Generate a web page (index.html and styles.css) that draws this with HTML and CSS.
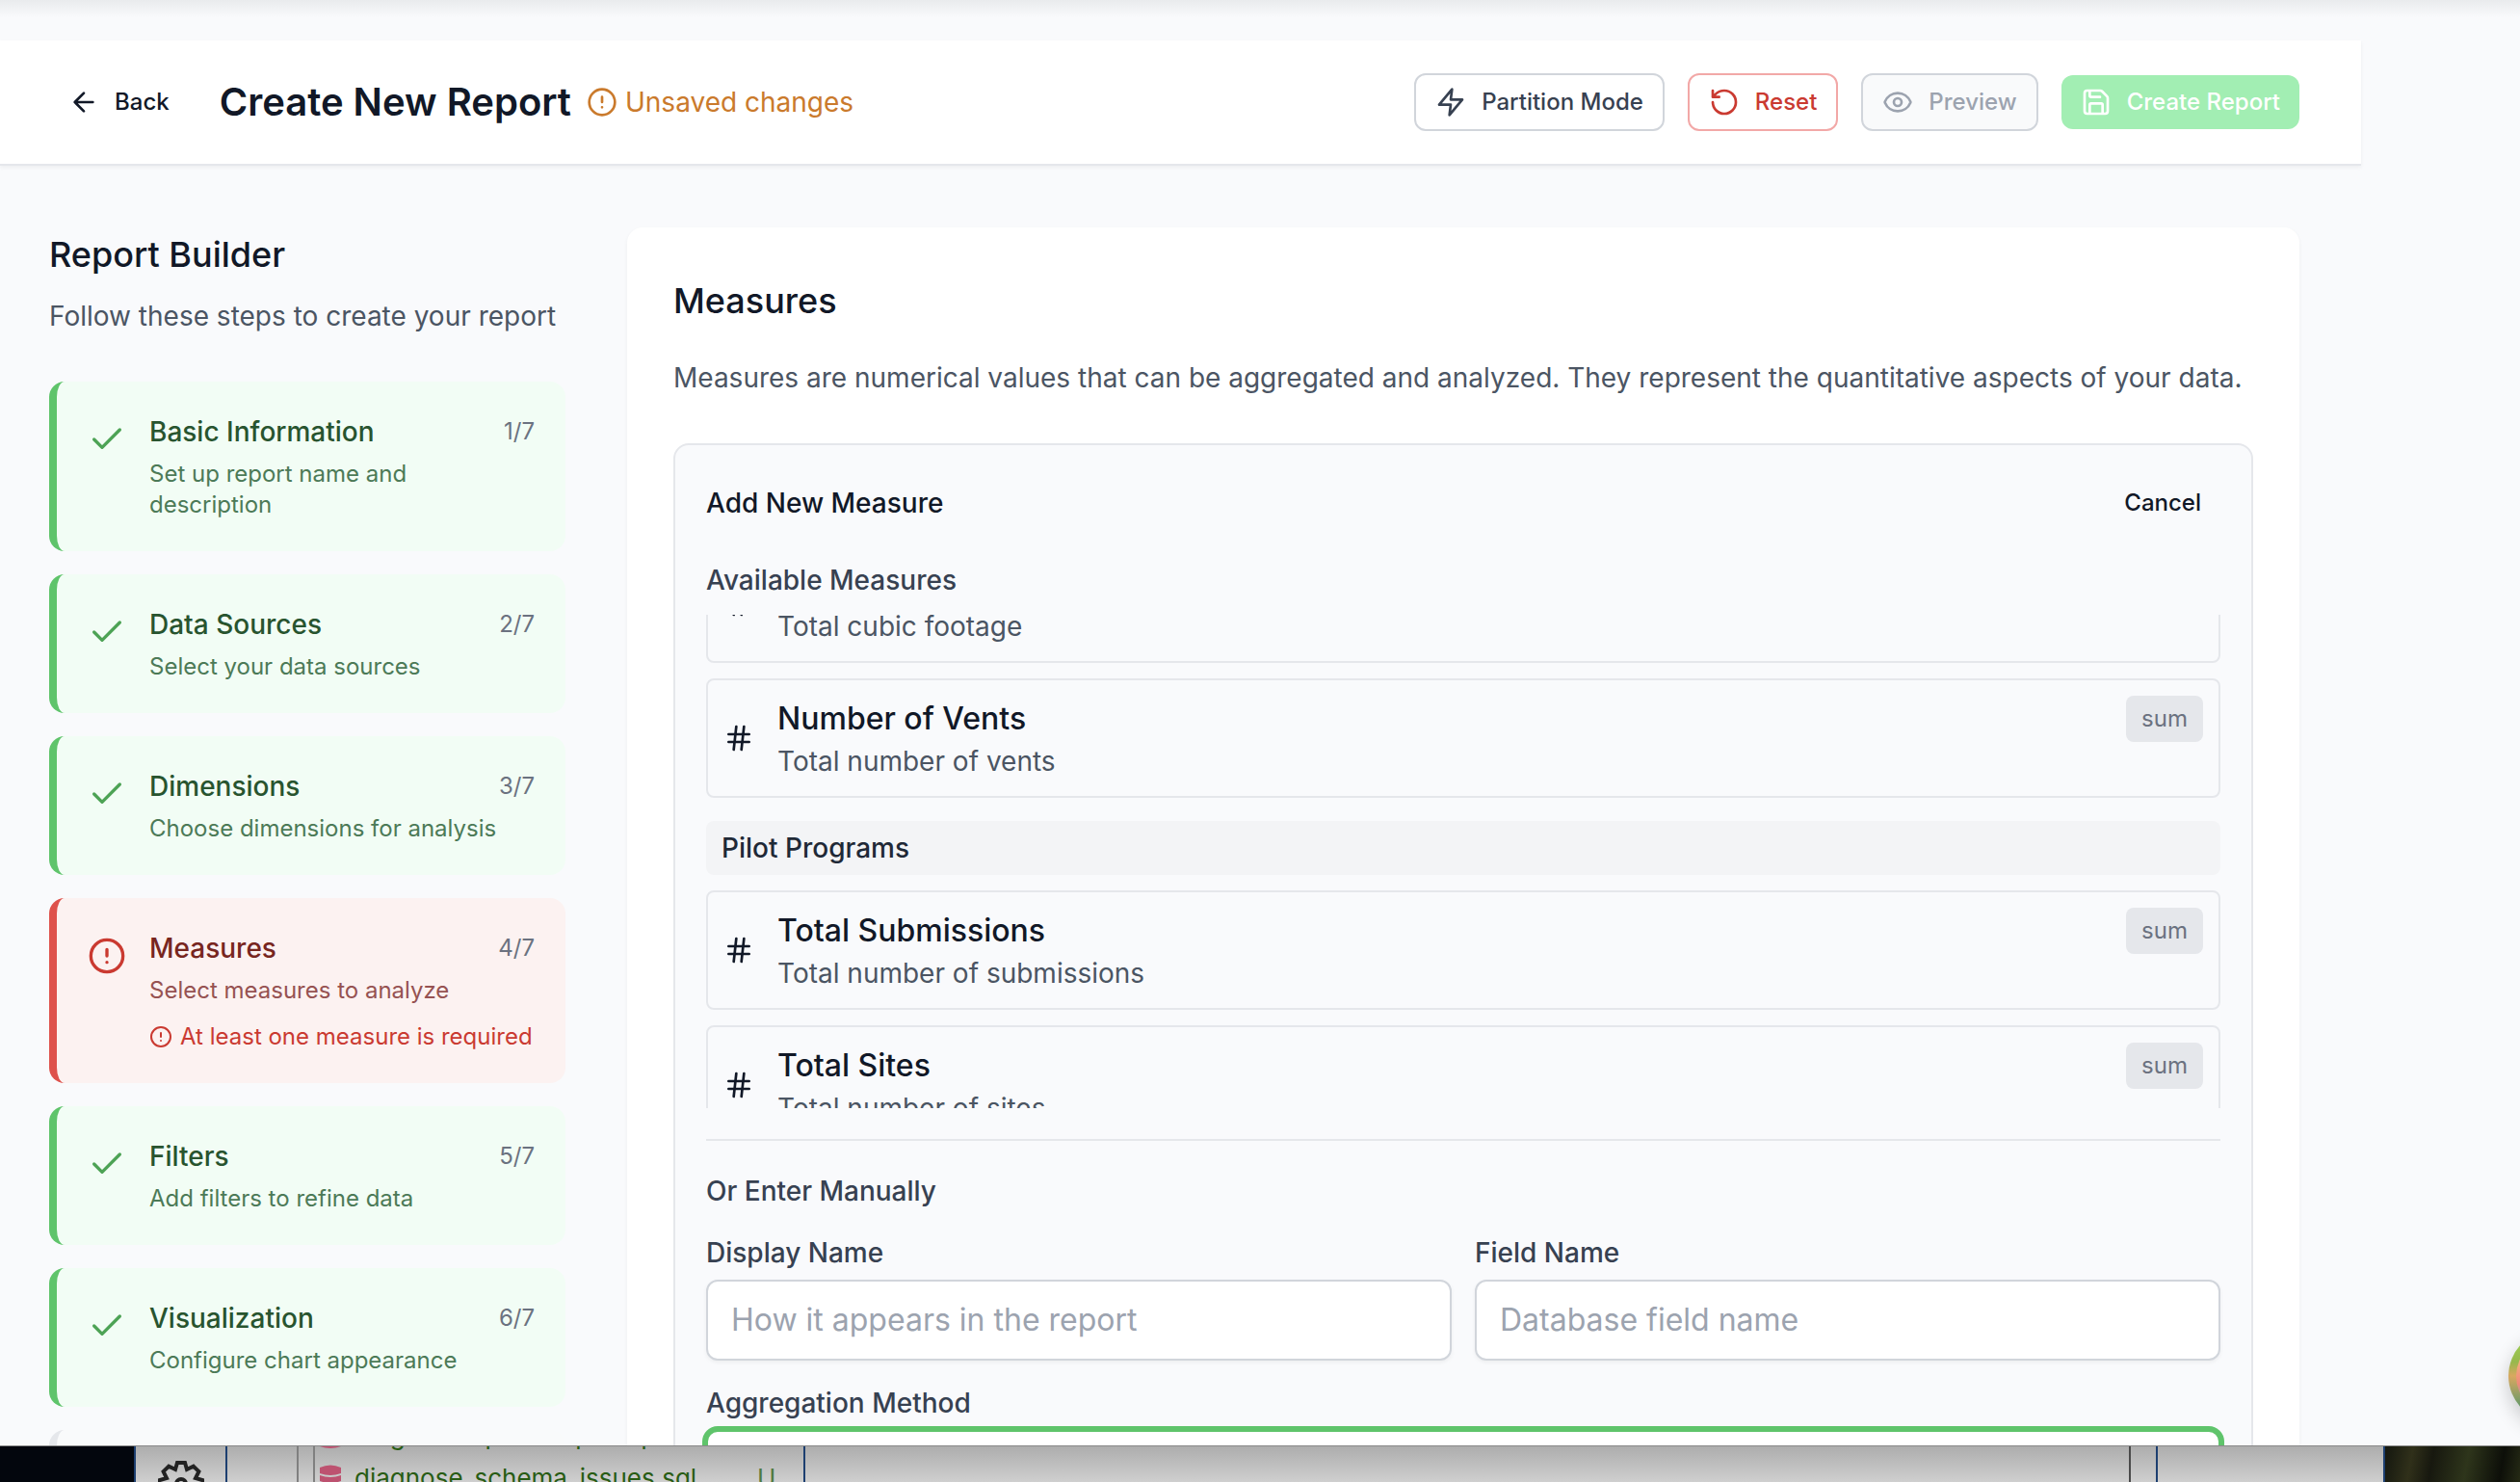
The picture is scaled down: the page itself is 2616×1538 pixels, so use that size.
FILE: index.html
```html
<!DOCTYPE html>
<html lang="en">
<head>
<meta charset="utf-8">
<title>Create New Report</title>
<link rel="stylesheet" href="styles.css">
</head>
<body>
<svg class="sprite" aria-hidden="true">
  <symbol id="check" viewBox="0 0 24 24"><path d="M20 6 9 17l-5-5"/></symbol>
  <symbol id="alert" viewBox="0 0 24 24"><circle cx="12" cy="12" r="10"/><path d="M12 8v4M12 16h.01"/></symbol>
  <symbol id="hash" viewBox="0 0 24 24"><path d="M4 9h16M4 15h16M10 3 8 21M16 3l-2 18"/></symbol>
  <symbol id="back" viewBox="0 0 24 24"><path d="m12 19-7-7 7-7M19 12H5"/></symbol>
  <symbol id="bolt" viewBox="0 0 24 24"><path d="M13 2 3 14h9l-1 8 10-12h-9z"/></symbol>
  <symbol id="reset" viewBox="0 0 24 24"><path d="M3 12a9 9 0 1 0 9-9 9.75 9.75 0 0 0-6.74 2.74L3 8M3 3v5h5"/></symbol>
  <symbol id="eye" viewBox="0 0 24 24"><path d="M2.06 12.35a1 1 0 0 1 0-.7 10.75 10.75 0 0 1 19.88 0 1 1 0 0 1 0 .7 10.75 10.75 0 0 1-19.88 0"/><circle cx="12" cy="12" r="3"/></symbol>
  <symbol id="save" viewBox="0 0 24 24"><path d="M15.2 3a2 2 0 0 1 1.4.6l3.8 3.8a2 2 0 0 1 .6 1.4V19a2 2 0 0 1-2 2H5a2 2 0 0 1-2-2V5a2 2 0 0 1 2-2zM17 21v-7a1 1 0 0 0-1-1H8a1 1 0 0 0-1 1v7M7 3v4a1 1 0 0 0 1 1h7"/></symbol>
  <symbol id="gear" viewBox="0 0 48 52"><path d="M20 4h8l2 7 6.800-3.400 5.600 5.600L39 20l7 2v8l-7 2 3.400 6.800-5.600 5.600L30 41l-2 7h-8l-2-7-6.800 3.400-5.600-5.600L9 32l-7-2v-8l7-2-3.400-6.800 5.600-5.600L18 11z"/><circle cx="24" cy="26" r="5"/></symbol>
  <symbol id="database" viewBox="0 0 22 28"><path d="M0 3q11-5 22 0v6q-11 4-22 0zM0 11q11 4 22 0v6q-11 4-22 0zM0 19q11 4 22 0v6q-11 4-22 0z"/></symbol>
</svg>

<div class="window">
  <header class="topbar">
    <button class="btn btn-ghost" type="button"><svg class="icon"><use href="#back"/></svg>Back</button>
    <h1 class="topbar-title">Create New Report</h1>
    <p class="unsaved"><svg class="icon"><use href="#alert"/></svg>Unsaved changes</p>
    <div class="actions">
      <button class="btn btn-outline" type="button"><svg class="icon"><use href="#bolt"/></svg>Partition Mode</button>
      <button class="btn btn-outline btn-danger" type="button"><svg class="icon"><use href="#reset"/></svg>Reset</button>
      <button class="btn btn-outline btn-muted" type="button" disabled><svg class="icon"><use href="#eye"/></svg>Preview</button>
      <button class="btn btn-primary" type="button" disabled><svg class="icon"><use href="#save"/></svg>Create Report</button>
    </div>
  </header>

  <div class="layout">
    <aside class="sidebar">
      <h2 class="heading">Report Builder</h2>
      <p class="sidebar-intro">Follow these steps to create your report</p>
      <ol class="steps">
        <li class="step"><svg class="step-icon"><use href="#check"/></svg><div class="step-body"><h3 class="step-title">Basic Information</h3><p class="step-text">Set up report name and description</p></div><span class="step-count">1/7</span></li>
        <li class="step"><svg class="step-icon"><use href="#check"/></svg><div class="step-body"><h3 class="step-title">Data Sources</h3><p class="step-text">Select your data sources</p></div><span class="step-count">2/7</span></li>
        <li class="step"><svg class="step-icon"><use href="#check"/></svg><div class="step-body"><h3 class="step-title">Dimensions</h3><p class="step-text">Choose dimensions for analysis</p></div><span class="step-count">3/7</span></li>
        <li class="step step-error"><svg class="step-icon"><use href="#alert"/></svg><div class="step-body"><h3 class="step-title">Measures</h3><p class="step-text">Select measures to analyze</p><p class="step-alert"><svg class="icon-small"><use href="#alert"/></svg>At least one measure is required</p></div><span class="step-count">4/7</span></li>
        <li class="step"><svg class="step-icon"><use href="#check"/></svg><div class="step-body"><h3 class="step-title">Filters</h3><p class="step-text">Add filters to refine data</p></div><span class="step-count">5/7</span></li>
        <li class="step"><svg class="step-icon"><use href="#check"/></svg><div class="step-body"><h3 class="step-title">Visualization</h3><p class="step-text">Configure chart appearance</p></div><span class="step-count">6/7</span></li>
        <li class="step step-pending"></li>
      </ol>
    </aside>

    <main class="panel">
      <h2 class="heading">Measures</h2>
      <p class="panel-intro">Measures are numerical values that can be aggregated and analyzed. They represent the quantitative aspects of your data.</p>
      <section class="card">
        <div class="card-head">
          <h3 class="card-title">Add New Measure</h3>
          <button class="btn btn-ghost" type="button">Cancel</button>
        </div>
        <h4 class="label available">Available Measures</h4>
        <div class="measures">
          <div class="measure"><svg class="icon"><use href="#hash"/></svg><div class="measure-body"><p class="measure-name"></p><p class="measure-text">Total cubic footage</p></div></div>
          <div class="measure"><svg class="icon"><use href="#hash"/></svg><div class="measure-body"><p class="measure-name">Number of Vents</p><p class="measure-text">Total number of vents</p></div><span class="badge">sum</span></div>
          <h5 class="group">Pilot Programs</h5>
          <div class="measure"><svg class="icon"><use href="#hash"/></svg><div class="measure-body"><p class="measure-name">Total Submissions</p><p class="measure-text">Total number of submissions</p></div><span class="badge">sum</span></div>
          <div class="measure"><svg class="icon"><use href="#hash"/></svg><div class="measure-body"><p class="measure-name">Total Sites</p><p class="measure-text">Total number of sites</p></div><span class="badge">sum</span></div>
        </div>
        <div class="manual">
          <h4 class="label">Or Enter Manually</h4>
          <div class="fields">
            <div class="field"><label class="label" for="display-name">Display Name</label><input class="input" id="display-name" type="text" placeholder="How it appears in the report"></div>
            <div class="field"><label class="label" for="field-name">Field Name</label><input class="input" id="field-name" type="text" placeholder="Database field name"></div>
            <div class="field field-wide"><label class="label" for="method">Aggregation Method</label><select class="input input-active" id="method"><option></option></select></div>
          </div>
        </div>
      </section>
    </main>
  </div>
  <div class="assistant"></div>
</div>

<div class="desktop">
  <div class="wallpaper wallpaper-left"></div>
  <div class="rail"><svg class="gear"><use href="#gear"/></svg></div>
  <div class="editor">
    <div class="tree">
      <div class="files">
        <div class="file"><svg class="database"><use href="#database"/></svg><span class="file-name">diagnose_rpc_sample.sql</span><span class="file-state">U</span></div>
        <div class="file"><svg class="database"><use href="#database"/></svg><span class="file-name">diagnose_schema_issues.sql</span><span class="file-state">U</span></div>
      </div>
    </div>
  </div>
  <div class="pane"></div>
  <div class="gutter"></div>
  <div class="side-pane"></div>
  <div class="wallpaper wallpaper-right"></div>
</div>
</body>
</html>
```
FILE: styles.css
```css
* { box-sizing: border-box; margin: 0; padding: 0; }
body {
  height: 100vh;
  display: flex;
  flex-direction: column;
  overflow: hidden;
  font-family: Inter, "Liberation Sans", sans-serif;
  font-size: 28px;
  line-height: 40px;
  color: #111827;
  background: #f9fafb;
}
ol { list-style: none; }
button, input, select { font: inherit; color: inherit; }
svg { flex: none; fill: none; stroke: currentColor; stroke-width: 2; stroke-linecap: round; stroke-linejoin: round; }
.sprite { position: absolute; width: 0; height: 0; }

.window {
  position: relative;
  flex: 1;
  min-height: 0;
  padding-top: 42px;
  overflow: hidden;
  background: linear-gradient(#e9ebed, #f9fafc 18px);
}
.topbar {
  display: flex;
  align-items: center;
  height: 130px;
  margin-right: 165px;
  padding: 0 64px 0 51px;
  background: #fff;
  border-bottom: 2px solid #e5e7eb;
  box-shadow: 0 2px 4px rgba(0, 0, 0, .05);
}
.topbar-title { margin-left: 32px; font-size: 40px; line-height: 56px; font-weight: 600; }
.unsaved { display: flex; align-items: center; gap: 8px; margin-left: 16px; color: #ca7a2c; }
.icon { width: 32px; height: 32px; }
.icon-small { width: 24px; height: 24px; }
.actions { display: flex; align-items: center; gap: 24px; margin-left: auto; }
.btn {
  display: flex;
  align-items: center;
  gap: 16px;
  padding: 12px 20px;
  border: 0;
  border-radius: 12px;
  background: transparent;
  font-size: 24px;
  line-height: 32px;
  font-weight: 500;
}
.btn-outline { border: 2px solid #d1d5db; background: #fff; color: #374151; }
.btn-danger { border-color: #f2a8a7; color: #ca3a31; }
.btn-muted { background: #f9fafb; color: #9ca3af; }
.btn-primary { background: #a2eeb3; color: #fff; }

.layout {
  display: grid;
  grid-template-columns: 536px minmax(0, 1fr);
  gap: 64px;
  padding: 64px 229px 0 51px;
}
.heading { font-size: 36px; line-height: 56px; font-weight: 500; }
.sidebar-intro { margin-top: 16px; color: #4b5563; }
.steps { display: flex; flex-direction: column; gap: 24px; margin-top: 48px; }
.step {
  display: flex;
  align-items: flex-start;
  padding: 32px;
  border-left: 8px solid #5fc46b;
  border-radius: 16px;
  background: #f2fdf5;
  color: #4c7a57;
}
.step-icon { width: 40px; height: 40px; margin: 8px 24px 0 0; color: #4da355; }
.step-body { flex: 1; min-width: 0; }
.step-title { font-size: 28px; line-height: 40px; font-weight: 500; color: #28542f; }
.step-text { margin-top: 8px; font-size: 24px; line-height: 32px; }
.step-count { font-size: 24px; line-height: 40px; color: #6b7280; }
.step-error { border-color: #de524c; background: #fcf2f1; color: #965252; }
.step-error .step-icon, .step-alert { color: #ca3a31; }
.step-error .step-title { color: #77261f; }
.step-alert { display: flex; align-items: center; gap: 8px; margin-top: 16px; font-size: 24px; line-height: 32px; white-space: nowrap; }
.step-pending { height: 144px; border-color: #e5e7eb; background: #f9fafb; }

.panel { padding: 48px; background: #fff; border-radius: 16px; box-shadow: 0 2px 4px rgba(0, 0, 0, .05); }
.panel-intro { margin-top: 32px; color: #4b5563; }
.card { margin-top: 48px; padding: 32px; border: 2px solid #e5e7eb; border-radius: 16px; background: #f9fafc; }
.card-head { display: flex; align-items: center; justify-content: space-between; }
.card-title { font-size: 28px; font-weight: 500; }
.label { display: block; font-size: 28px; line-height: 40px; font-weight: 500; color: #374151; }
.available { margin-top: 32px; }
.measures {
  display: flex;
  flex-direction: column;
  justify-content: flex-end;
  gap: 16px;
  height: 512px;
  margin-top: 16px;
  overflow: hidden;
}
.measure { display: flex; flex: none; align-items: center; padding: 16px; border: 2px solid #e5e7eb; border-radius: 8px; }
.measure:last-child { margin-bottom: -38px; }
.measure-body { flex: 1; margin-left: 24px; }
.measure-name { min-height: 48px; font-size: 32px; line-height: 48px; font-weight: 500; }
.measure-text { color: #4b5563; }
.badge { align-self: flex-start; padding: 8px 16px; border-radius: 8px; background: #e5e7eb; color: #6b7280; font-size: 24px; line-height: 32px; }
.group { flex: none; margin-top: 8px; padding: 8px 16px; border-radius: 8px; background: #f3f4f6; font-size: 28px; font-weight: 500; color: #1f2937; }
.manual { margin-top: 32px; padding-top: 32px; border-top: 2px solid #e5e7eb; }
.fields { display: grid; grid-template-columns: 1fr 1fr; gap: 24px; margin-top: 24px; }
.field-wide { grid-column: 1 / -1; }
.input {
  display: block;
  width: 100%;
  height: 84px;
  margin-top: 8px;
  padding: 14px 24px 16px;
  border: 2px solid #d1d5db;
  border-radius: 12px;
  background: #fff;
  box-shadow: 0 2px 4px rgba(0, 0, 0, .05);
  font-size: 32px;
  line-height: 48px;
}
.input::placeholder { color: #9ca3af; opacity: 1; }
.input-active { appearance: none; border-color: #5fc46b; box-shadow: 0 0 0 4px #5fc46b; }

.assistant {
  position: absolute;
  right: -84px;
  bottom: 24px;
  width: 96px;
  height: 96px;
  border-radius: 50%;
  border: 8px solid transparent;
  background: linear-gradient(#f5d58a, #f08a78 60%, #4fb4d8) padding-box, linear-gradient(#9ccb52 15%, #97b84d 35%, #d9a860 50%, #6f9a68 80%) border-box;
  box-shadow: 0 8px 20px rgba(0, 0, 0, .2);
}

.desktop { display: flex; height: 38px; border-top: 1px solid #888; overflow: hidden; background: linear-gradient(#adadad, #cfcfcf); }
.wallpaper-left { width: 139px; background: #03060d; }
.wallpaper-right { width: 140px; background: linear-gradient(100deg, #14170f, #30301a 20%, #17180f 35%, #2e351b 60%, #0d0f09 85%, #252a15); }
.rail { width: 97px; border: solid #1d3f70; border-width: 0 2px; }
.gear { display: block; width: 48px; height: 52px; margin: 13px 0 0 23px; color: #222; stroke-width: 4; stroke-linejoin: miter; stroke-linecap: butt; }
.editor { width: 600px; padding-left: 72px; border-right: 2px solid #1d3f70; }
.tree { padding-left: 15px; border-left: 2px solid #808080; }
.files { display: flex; flex-direction: column; height: 100px; margin-top: -33px; padding-left: 5px; border-left: 2px solid #808080; }
.file { display: flex; flex: none; align-items: center; height: 44px; color: #285c14; font-size: 26px; }
.database { width: 22px; height: 28px; margin-right: 14px; fill: #bd5270; stroke: none; }
.file-name { width: 418px; }
.file-state { color: #4f7a40; }
.pane { flex: 1; border-right: 2px solid #4a4a4a; }
.gutter { width: 28px; border-right: 2px solid #1d3f70; }
.side-pane { width: 236px; border-right: 2px solid #1d3f70; }
```
